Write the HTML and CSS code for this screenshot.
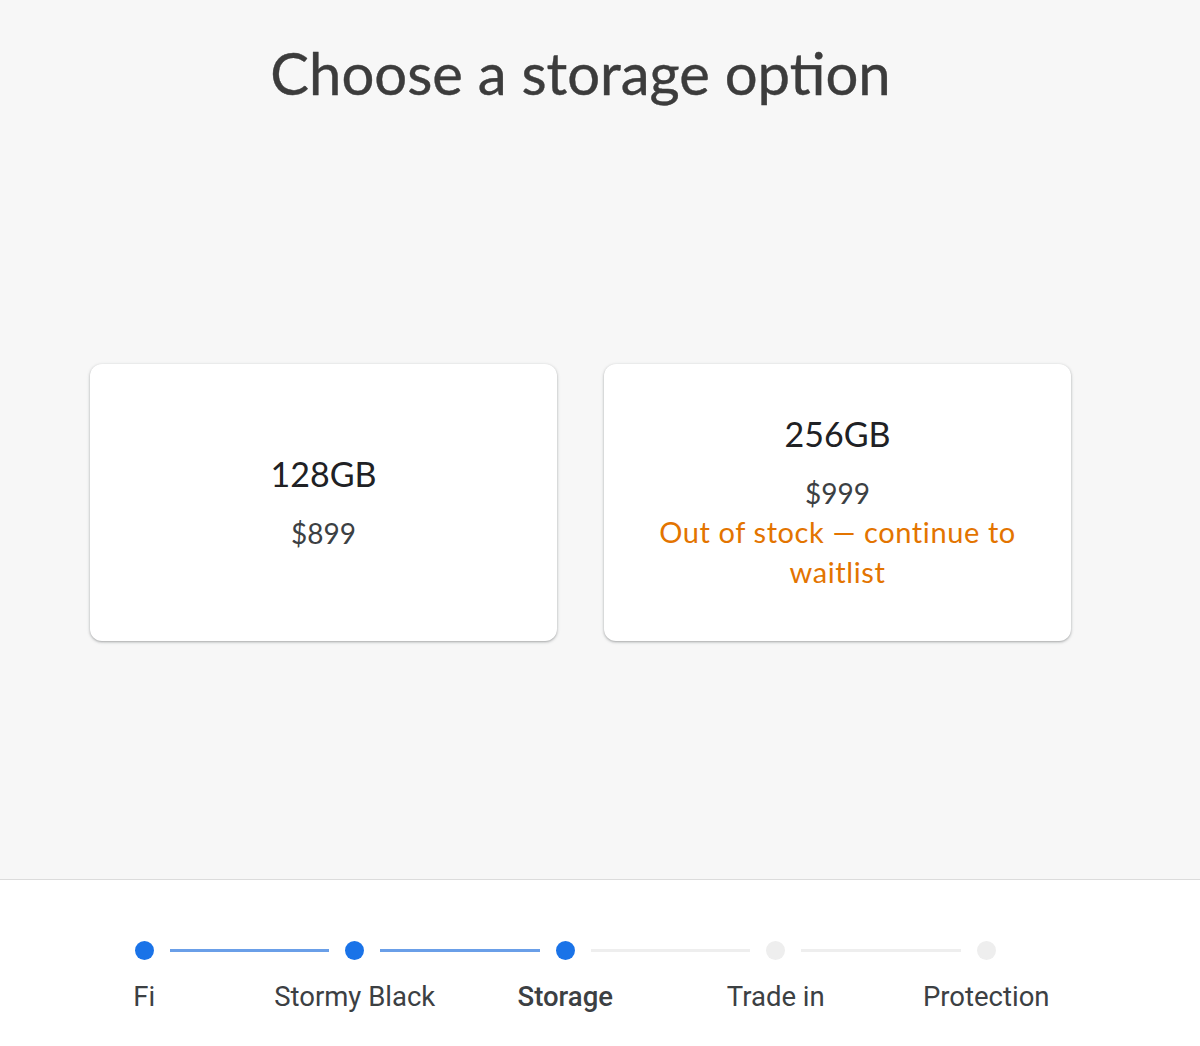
FILE: index.html
```html
<!DOCTYPE html>
<html lang="en">
<head>
<meta charset="utf-8">
<title>Choose a storage option</title>
<link rel="stylesheet" href="styles.css">
</head>
<body>
<div class="page">
  <main class="main">
    <div class="content">
      <h1 class="title">Choose a storage option</h1>
      <div class="cards">
        <div class="card">
          <div class="card-size">128GB</div>
          <div class="card-price">$899</div>
        </div>
        <div class="card">
          <div class="card-size">256GB</div>
          <div class="card-price">$999</div>
          <div class="card-stock">Out of stock — continue to waitlist</div>
        </div>
      </div>
    </div>
  </main>
  <footer class="footer">
    <div class="track">
      <span class="dot done"></span>
      <span class="line done"></span>
      <span class="dot done"></span>
      <span class="line done"></span>
      <span class="dot done"></span>
      <span class="line"></span>
      <span class="dot"></span>
      <span class="line"></span>
      <span class="dot"></span>
    </div>
    <div class="labels">
      <span class="label">Fi</span>
      <span class="label">Stormy Black</span>
      <span class="label current">Storage</span>
      <span class="label">Trade in</span>
      <span class="label">Protection</span>
    </div>
  </footer>
</div>
</body>
</html>
```

FILE: styles.css
```css
* { box-sizing: border-box; }
html, body { margin: 0; padding: 0; }
body {
  font-family: Roboto, "Liberation Sans", sans-serif;
  background: #ffffff;
  color: #3c4043;
}
.page {
  width: 1200px;
  height: 1046px;
  display: flex;
  flex-direction: column;
}
.main {
  height: 880px;
  background: #f7f7f7;
  border-bottom: 1px solid #dcdcdc;
}
.content {
  width: 1161px;
  display: flex;
  flex-direction: column;
  align-items: center;
}
.title {
  margin: 35px 0 0;
  font-family: Lato, "Open Sans", sans-serif;
  font-weight: 400;
  font-size: 58px;
  line-height: 76px;
  color: #3c3c3c;
  letter-spacing: 0;
  -webkit-text-stroke: 0.4px #3c3c3c;
}
.cards {
  margin-top: 253px;
  display: flex;
  gap: 47px;
}
.card {
  width: 467px;
  height: 277px;
  background: #fff;
  border-radius: 12px;
  box-shadow: 0 1px 2px rgba(60,64,67,0.3), 0 1px 3px 1px rgba(60,64,67,0.12);
  display: flex;
  flex-direction: column;
  align-items: center;
  justify-content: center;
  text-align: center;
  padding: 0 40px;
}
.card-size {
  font-family: Lato, "Open Sans", sans-serif;
  font-size: 34px;
  line-height: 40px;
  color: #202124;
}
.card-price {
  margin-top: 21px;
  font-family: Lato, "Open Sans", sans-serif;
  font-size: 28px;
  line-height: 36px;
  color: #3c4043;
}
.card-stock {
  margin-top: 1px;
  font-family: Lato, "Open Sans", sans-serif;
  font-size: 29px;
  letter-spacing: 0.6px;
  line-height: 40px;
  color: #e37400;
  max-width: 380px;
}
.footer {
  flex: 1;
  background: #fff;
  padding-top: 61px;
}
.track {
  display: flex;
  align-items: center;
  margin-left: 134.5px;
  height: 19px;
}
.dot {
  width: 19px;
  height: 19px;
  border-radius: 50%;
  background: #eeeeee;
  flex: none;
}
.dot.done { background: #1a73e8; }
.line {
  width: 159.5px;
  height: 3px;
  margin: 0 16px;
  background: #eeeeee;
  flex: none;
}
.line.done { background: #6a9fe8; }
.labels {
  display: grid;
  grid-template-columns: repeat(5, 210.5px);
  margin-left: 39px;
  margin-top: 22px;
}
.label {
  text-align: center;
  font-size: 27.5px;
  line-height: 30px;
  color: #3c4043;
}
.label.current {
  font-weight: 500;
  color: #3c4043;
}
```
